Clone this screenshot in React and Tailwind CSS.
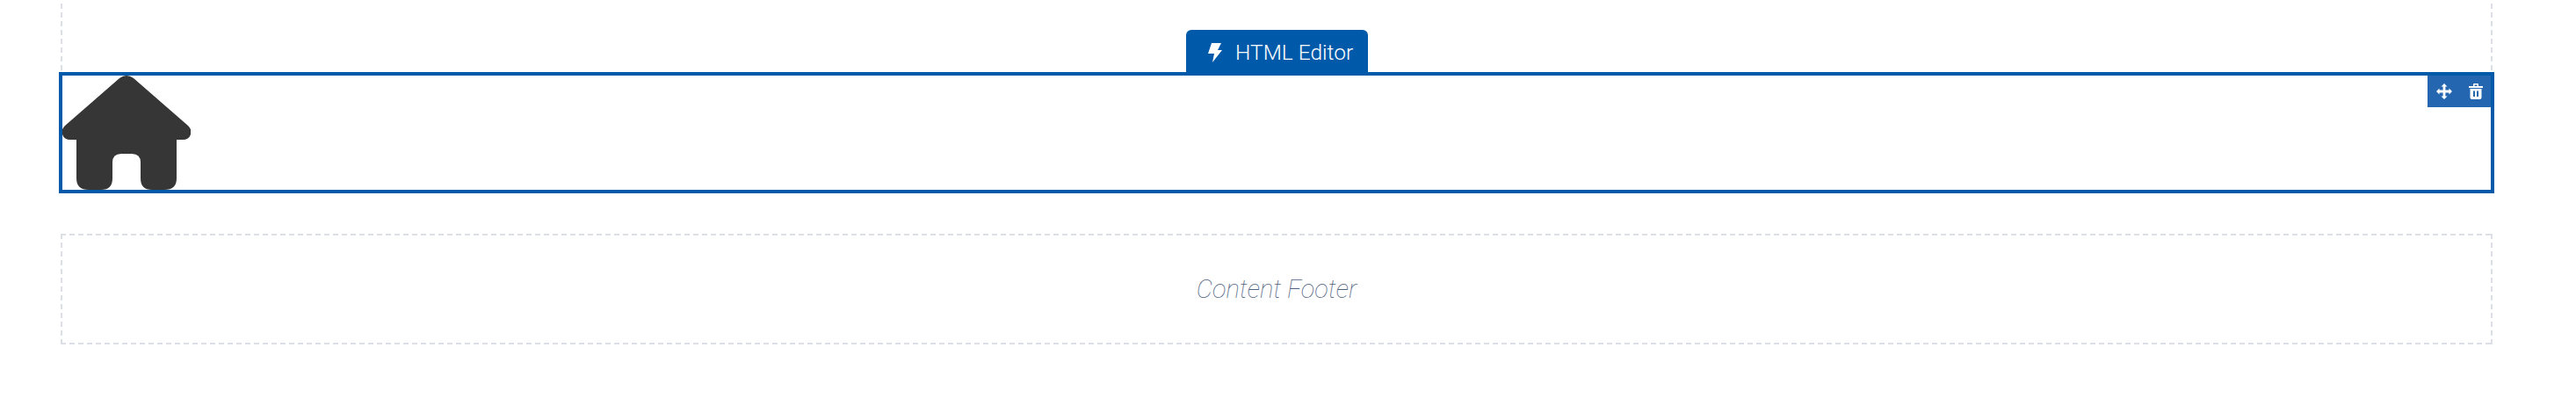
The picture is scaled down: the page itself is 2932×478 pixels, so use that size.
function HomeIcon() {
  return (
    <svg width="146" height="130" viewBox="0 0 146 130" className="block">
      <path
        fill="#363636"
        d="M65 3 Q73 -3 81 3 L143 57 Q148 62 146 67 Q144 73 137 73 L130 73 L130 117 Q130 130 116 130 L102 130 Q89 130 89 117 L89 99 Q89 89 79 89 L67 89 Q57 89 57 99 L57 117 Q57 130 44 130 L30 130 Q16 130 16 117 L16 73 L9 73 Q2 73 0 67 Q-2 62 3 57 Z"
      />
    </svg>
  );
}

function BoltIcon() {
  return (
    <svg width="16" height="22" viewBox="0 0 16 22" className="block shrink-0">
      <path fill="#fff" d="M4 0 L15 0 L11 8 L16 8 L5 22 L7 12 L0 12 Z" />
    </svg>
  );
}

function MoveIcon() {
  return (
    <svg width="18" height="18" viewBox="0 0 18 18" className="block">
      <path
        fill="#fff"
        d="M9 0 L12.5 3.5 L10.4 3.5 L10.4 7.6 L14.5 7.6 L14.5 5.5 L18 9 L14.5 12.5 L14.5 10.4 L10.4 10.4 L10.4 14.5 L12.5 14.5 L9 18 L5.5 14.5 L7.6 14.5 L7.6 10.4 L3.5 10.4 L3.5 12.5 L0 9 L3.5 5.5 L3.5 7.6 L7.6 7.6 L7.6 3.5 L5.5 3.5 Z"
      />
    </svg>
  );
}

function TrashIcon() {
  return (
    <svg width="16" height="18" viewBox="0 0 16 18" className="block">
      <path
        fill="#fff"
        fillRule="evenodd"
        d="M0 3 H5 V1 Q5 0 6 0 H10 Q11 0 11 1 V3 H16 V5 H0 Z M6.5 1.5 V3 H9.5 V1.5 Z M1.5 6 H14.5 V16 Q14.5 18 12.5 18 H3.5 Q1.5 18 1.5 16 Z M5 8.5 V15 H7 V8.5 Z M9 8.5 V15 H11 V8.5 Z"
      />
    </svg>
  );
}

export default function App() {
  return (
    <div className="h-[478px] w-[2932px] overflow-hidden bg-white pl-[69px] pr-[95px] pt-[4px]">
      {/* Content body, its top edge is cut off by the page. Dashes are 6 on / 4 off, gradients because a 2px border dashes finer */}
      <div className="h-[78px] bg-[repeating-linear-gradient(180deg,#dcdfe6_0_6px,transparent_6px_10px),repeating-linear-gradient(180deg,#dcdfe6_0_6px,transparent_6px_10px)] bg-[size:2px_100%,2px_100%] bg-[position:0_0,100%_0] bg-no-repeat" />

      {/* Selected component */}
      <div className="relative -mx-[2px] h-[138px] border-4 border-[#005aa9]">
        <div className="absolute -top-[52px] left-[1279px] flex h-[50px] w-[207px] items-center gap-[15px] rounded-t-[6px] bg-[#005aa9] pl-[25px] pt-[2px] font-['Roboto',sans-serif] text-[24.5px] font-light text-white">
          <BoltIcon />
          <span>HTML Editor</span>
        </div>
        <div className="absolute right-0 top-0 flex h-[36px] w-[72px] items-center justify-around bg-[#2566b0]">
          <MoveIcon />
          <TrashIcon />
        </div>
        <HomeIcon />
      </div>

      {/* Content footer */}
      <div className="mt-[46px] flex h-[126px] items-center justify-center bg-[repeating-linear-gradient(90deg,#dcdfe6_0_6px,transparent_6px_10px),repeating-linear-gradient(90deg,#dcdfe6_0_6px,transparent_6px_10px),repeating-linear-gradient(180deg,#dcdfe6_0_6px,transparent_6px_10px),repeating-linear-gradient(180deg,#dcdfe6_0_6px,transparent_6px_10px)] bg-[size:100%_2px,100%_2px,2px_100%,2px_100%] bg-[position:0_0,0_100%,0_0,100%_0] bg-no-repeat pt-[2px] font-['Roboto',sans-serif] text-[29px] font-thin italic text-[#4f6280]">
        Content Footer
      </div>
    </div>
  );
}
